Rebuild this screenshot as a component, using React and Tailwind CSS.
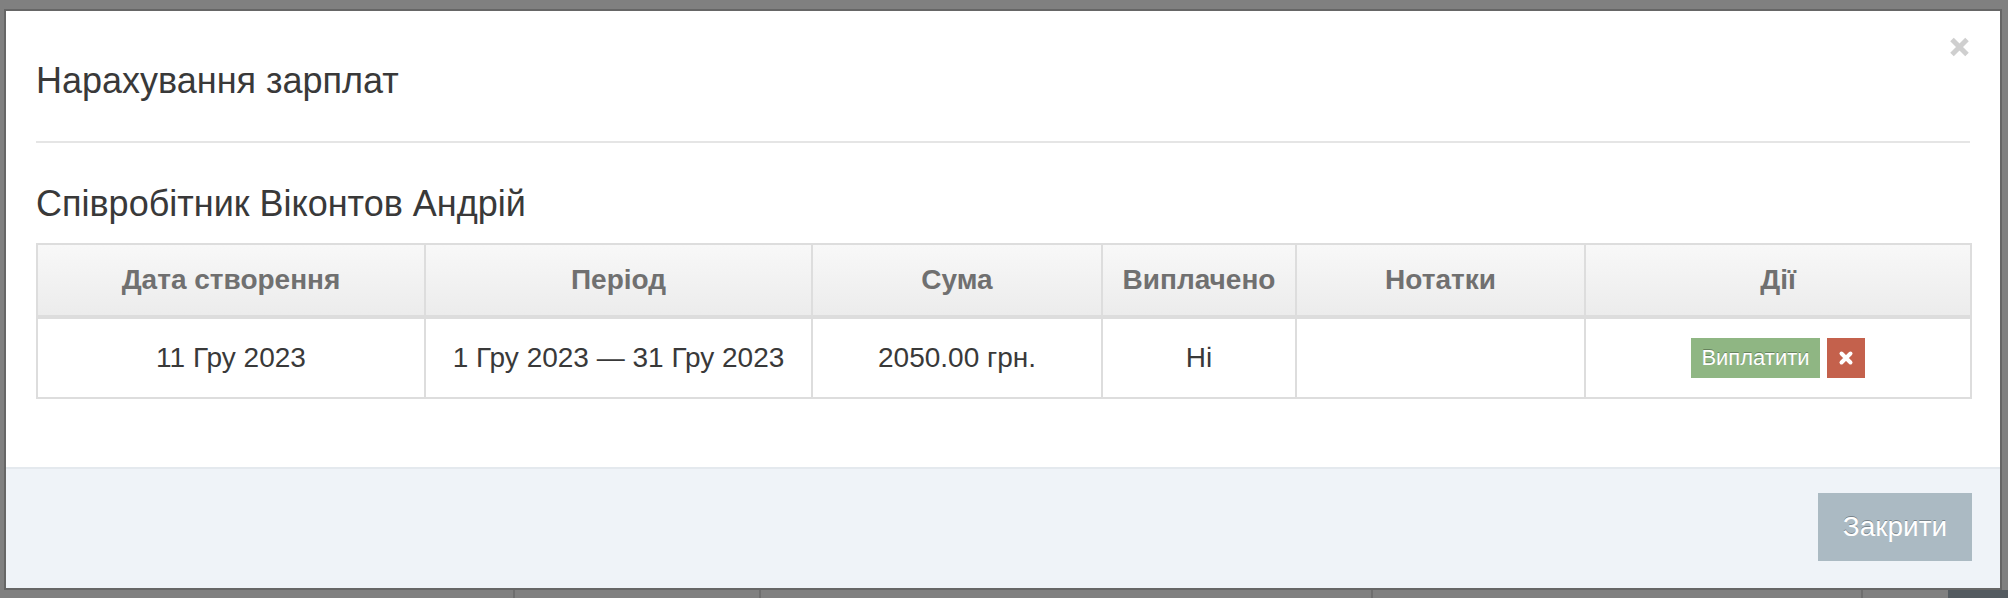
import React from "react";

const headers = ["Дата створення", "Період", "Сума", "Виплачено", "Нотатки", "Дії"];

function App() {
  return (
    <div className="w-[2008px] h-[598px] overflow-hidden bg-[#808080] font-['Liberation_Sans',Arial,sans-serif] flex flex-col">
      <div className="ml-[4px] mt-[9px] w-[1998px] border-2 border-[#666] bg-white relative">
        {/* header */}
        <div className="mx-[30px] pt-[44px] pb-[35px] border-b-2 border-[#e5e5e5]">
          <h4 className="text-[36px] leading-[51px] text-[#393939]">Нарахування зарплат</h4>
        </div>
        <button className="absolute top-[26px] right-[30px] w-[21px] h-[20px]">
          <svg width="21" height="20" viewBox="0 0 21 20">
            <path d="M3 2.5 L18 17.5 M18 2.5 L3 17.5" stroke="#cfcfcf" strokeWidth="5" />
          </svg>
        </button>

        {/* body */}
        <div className="px-[30px] pt-[35px] pb-[68px]">
          <h4 className="text-[36px] leading-[51px] text-[#393939] mb-[14px]">Співробітник Віконтов Андрій</h4>
          <table className="w-full table-fixed border-collapse border-2 border-[#ddd]">
            <colgroup>
              <col className="w-[388px]" />
              <col className="w-[387px]" />
              <col className="w-[290px]" />
              <col className="w-[194px]" />
              <col className="w-[289px]" />
              <col className="w-[386px]" />
            </colgroup>
            <thead>
              <tr>
                {headers.map((h) => (
                  <th
                    key={h}
                    className="border-2 border-b-4 border-[#ddd] bg-linear-to-b from-[#f8f8f8] to-[#ececec] py-[15px] text-[28px] leading-[40px] font-bold text-[#707070] text-center"
                  >
                    {h}
                  </th>
                ))}
              </tr>
            </thead>
            <tbody>
              <tr className="text-[28px] leading-[40px] text-[#393939] text-center">
                <td className="border-2 border-[#ddd] py-[19px]">11 Гру 2023</td>
                <td className="border-2 border-[#ddd] py-[19px]">1 Гру 2023 — 31 Гру 2023</td>
                <td className="border-2 border-[#ddd] py-[19px]">2050.00 грн.</td>
                <td className="border-2 border-[#ddd] py-[19px]">Ні</td>
                <td className="border-2 border-[#ddd] py-[19px]"></td>
                <td className="border-2 border-[#ddd] py-[19px]">
                  <div className="flex justify-center gap-[7px]">
                    <button className="w-[129px] h-[40px] bg-[#8fb683] text-white text-[22px] leading-[40px] [text-shadow:0_-1px_0_rgba(0,0,0,0.3)]">
                      Виплатити
                    </button>
                    <button className="w-[38px] h-[40px] bg-[#c4614c] flex items-center justify-center">
                      <svg width="16" height="16" viewBox="0 0 16 16">
                        <path d="M3.5 3.5 L12.5 12.5 M12.5 3.5 L3.5 12.5" stroke="#fff" strokeWidth="4" strokeLinecap="round" />
                      </svg>
                    </button>
                  </div>
                </td>
              </tr>
            </tbody>
          </table>
        </div>

        {/* footer */}
        <div className="border-t-2 border-[#e4e9ee] bg-[#eff3f8] pt-[24px] pb-[27px] pr-[28px] flex justify-end">
          <button className="w-[154px] h-[68px] bg-[#abbac3] text-white text-[28px] [text-shadow:0_-1px_0_rgba(0,0,0,0.3)]">
            Закрити
          </button>
        </div>
      </div>

      {/* page behind the backdrop */}
      <div className="flex-1 flex">
        <div className="w-[513px]"></div>
        <div className="w-[246px] border-l-2 border-[#6e6e6e]"></div>
        <div className="w-[612px] border-l-2 border-[#6e6e6e]"></div>
        <div className="w-[490px] border-l-2 border-[#6e6e6e]"></div>
        <div className="w-[87px] border-l-2 border-[#6e6e6e]"></div>
        <div className="flex-1 bg-[#545b60]"></div>
      </div>
    </div>
  );
}

export default App;
